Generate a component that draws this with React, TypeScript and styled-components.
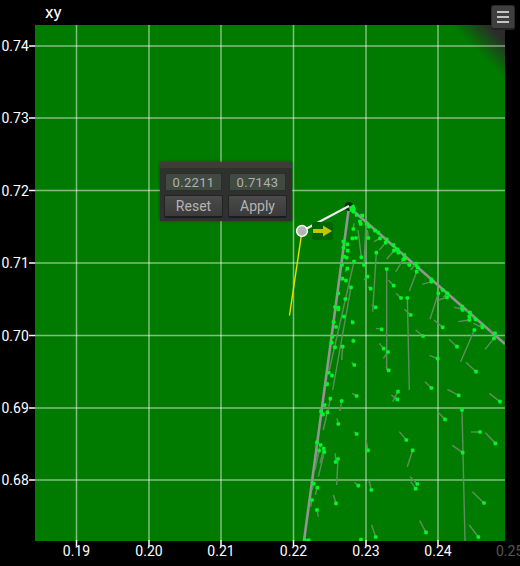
import styled, { createGlobalStyle } from 'styled-components'

const GlobalStyle = createGlobalStyle`
  html, body {
    margin: 0;
    background: #000;
    font-family: Roboto, 'Liberation Sans', sans-serif;
  }
`

type Arrow = [number, number, number, number]

// head x, head y, tail x, tail y: pixels of the upper half of the gamut
const upperArrows: Arrow[] = [
  [290, 177, 290, 480], [352, 264, 358, 540], [259, 128, 248, 305], [380, 185, 358, 243],
  [445, 250, 420, 328], [553, 360, 512, 455], [517, 297, 492, 292], [612, 385, 585, 418],
  [538, 330, 505, 335], [458, 352, 432, 330], [399, 378, 377, 360], [501, 410, 477, 388],
  [558, 485, 528, 457], [443, 446, 418, 436], [362, 315, 343, 298], [333, 264, 318, 250],
  [311, 227, 295, 210], [257, 292, 245, 285], [275, 358, 258, 355], [281, 416, 268, 400],
  [294, 426, 280, 445], [296, 481, 287, 470], [193, 465, 185, 457], [190, 393, 190, 385],
  [158, 410, 155, 450], [188, 337, 184, 330], [242, 236, 235, 230], [232, 200, 222, 210],
  [222, 165, 228, 40], [183, 232, 128, 540], [192, 155, 118, 480], [214, 142, 204, 60],
  [340, 148, 317, 186], [312, 122, 290, 147], [424, 215, 397, 223], [471, 262, 445, 270],
  [378, 161, 362, 180], [287, 98, 268, 120], [270, 85, 252, 95], [235, 84, 232, 60],
  [190, 57, 192, 40], [198, 84, 186, 85], [168, 212, 160, 205], [172, 176, 166, 185],
  [166, 267, 166, 275], [162, 320, 155, 318], [145, 293, 135, 285], [135, 412, 128, 408],
  [458, 240, 450, 236], [472, 250, 460, 262], [518, 300, 510, 290], [540, 308, 530, 300],
  [557, 328, 548, 322], [577, 352, 550, 340], [615, 370, 600, 362], [358, 165, 350, 160],
  [190, 5, 185, 3], [200, 15, 196, 10], [217, 17, 210, 12], [210, 35, 205, 30],
  [212, 42, 208, 38], [230, 40, 226, 35], [237, 50, 232, 45], [255, 62, 250, 58],
  [265, 68, 260, 64], [290, 88, 285, 84], [310, 105, 305, 100], [322, 118, 317, 113],
  [325, 128, 320, 123], [343, 135, 338, 130], [345, 145, 340, 140], [383, 172, 378, 168],
  [424, 208, 419, 204], [517, 290, 512, 286], [538, 320, 533, 316], [577, 345, 572, 341],
  [160, 95, 160, 90], [172, 103, 172, 98], [160, 113, 160, 108], [173, 122, 173, 117],
  [162, 140, 162, 135], [170, 143, 170, 138], [156, 165, 156, 160], [157, 206, 157, 201],
  [145, 250, 145, 245], [135, 291, 135, 286], [145, 298, 145, 293], [131, 336, 131, 331],
  [138, 351, 138, 346], [127, 380, 127, 375], [125, 398, 125, 393], [116, 488, 116, 483],
  [126, 497, 126, 492], [111, 522, 111, 517], [187, 85, 187, 80]
]

// same, for the lower half
const lowerArrows: Arrow[] = [
  [424, 24, 405, 5], [506, 46, 472, 28], [630, 65, 598, 40], [516, 90, 525, 483],
  [465, 118, 443, 95], [570, 156, 543, 156], [616, 190, 586, 158], [349, 180, 328, 155],
  [518, 218, 487, 196], [368, 211, 352, 260], [234, 211, 228, 180], [200, 162, 192, 155],
  [145, 132, 141, 115], [155, 63, 150, 93], [200, 48, 187, 40], [324, 35, 308, 65],
  [322, 58, 304, 45], [144, 237, 140, 315], [137, 246, 136, 220], [205, 317, 193, 307],
  [244, 330, 237, 300], [382, 312, 360, 290], [377, 326, 362, 305], [582, 369, 547, 335],
  [138, 370, 130, 345], [408, 457, 389, 422], [565, 471, 538, 435], [257, 471, 245, 435],
  [213, 479, 208, 483], [81, 390, 85, 410], [66, 360, 62, 380], [71, 311, 66, 330],
  [82, 323, 76, 345], [87, 212, 75, 270], [103, 216, 85, 290], [101, 206, 90, 250],
  [92, 195, 80, 240], [81, 187, 76, 200], [112, 97, 100, 150], [99, 103, 96, 110],
  [93, 94, 90, 100], [104, 75, 100, 85], [121, 56, 112, 100], [110, 13, 106, 20],
  [45, 481, 44, 483], [56, 481, 55, 483]
]

const xTicks = [
  { label: '0.19', x: 76.5 }, { label: '0.20', x: 149 }, { label: '0.21', x: 221 },
  { label: '0.22', x: 293.5 }, { label: '0.23', x: 366 }, { label: '0.24', x: 438 }
]
const yTicks = [
  { label: '0.74', y: 46 }, { label: '0.73', y: 118 }, { label: '0.72', y: 190.5 },
  { label: '0.71', y: 263 }, { label: '0.70', y: 335.5 }, { label: '0.69', y: 408 },
  { label: '0.68', y: 480 }
]

const upper = (x: number, y: number): [number, number] => [290 + x / 3, 210 + y / 3]
const lower = (x: number, y: number): [number, number] => [290 + x / 3, 380 + y / 3]

const ArrowSet = ({ arrows, map }: { arrows: Arrow[]; map: typeof upper }) => (
  <>
    {arrows.map(([hx, hy, tx, ty]) => {
      const [x1, y1] = map(hx, hy)
      const [x2, y2] = map(tx, ty)
      return <line key={`t${hx}-${hy}`} x1={x1} y1={y1} x2={x2} y2={y2} stroke="#5f8f5f" strokeWidth="1.4" />
    })}
    {arrows.map(([hx, hy]) => {
      const [cx, cy] = map(hx, hy)
      return <rect key={`h${hx}-${hy}`} x={cx - 1.8} y={cy - 1.8} width="3.6" height="3.6" rx="1" fill="#00f82a" />
    })}
  </>
)

const Chart = () => (
  <ChartSvg viewBox="0 0 520 566" width="520" height="566">
    <defs>
      <linearGradient id="outside" x1="505" y1="25" x2="478" y2="52" gradientUnits="userSpaceOnUse">
        <stop offset="0" stopColor="#2b2b2b" />
        <stop offset="0.3" stopColor="#2b2b2b" />
        <stop offset="1" stopColor="#2b2b2b" stopOpacity="0" />
      </linearGradient>
      <clipPath id="plot">
        <rect x="35" y="25" width="470" height="516" />
      </clipPath>
    </defs>

    <rect x="35" y="25" width="470" height="516" fill="#007b00" />
    <rect x="35" y="25" width="470" height="516" fill="url(#outside)" />

    <g stroke="#fff" strokeOpacity="0.5" strokeWidth="1.5">
      {xTicks.map((t) => <line key={t.label} x1={t.x} y1="25" x2={t.x} y2="541" />)}
      {yTicks.map((t) => <line key={t.label} x1="35" y1={t.y} x2="505" y2={t.y} />)}
    </g>
    <g stroke="#fff" strokeWidth="1.5">
      {xTicks.map((t) => <line key={t.label} x1={t.x} y1="540" x2={t.x} y2="546" />)}
      {yTicks.map((t) => <line key={t.label} x1="29" y1={t.y} x2="35" y2={t.y} />)}
    </g>

    <g clipPath="url(#plot)">
      <line x1="349" y1="207" x2="304" y2="541" stroke="#949494" strokeWidth="2.6" />
      <line x1="349" y1="207" x2="505" y2="344" stroke="#949494" strokeWidth="2.6" />
      <ArrowSet arrows={upperArrows} map={upper} />
      <ArrowSet arrows={lowerArrows} map={lower} />
    </g>

    <circle cx="349" cy="206.5" r="4.5" fill="#0a2a0a" />
    <path d="M349 207 L354 204 L356 210 L350 212 Z" fill="#00f82a" />
    <line x1="289.5" y1="315.5" x2="302" y2="231" stroke="#e6e000" strokeWidth="1.4" />
    <line x1="302" y1="231" x2="349" y2="206" stroke="#eee" strokeWidth="2" />
    <circle cx="302" cy="231" r="5.4" fill="#b4b4b4" stroke="#fff" strokeWidth="1.5" />
    <rect x="312" y="222" width="21" height="18" rx="3" fill="#006400" />
    <path d="M313 229 H323 V225.5 L332 231 L323 236.5 V233 H313 Z" fill="#c4c400" />

    <g fill="#fff" fontSize="14" fontFamily="Roboto, sans-serif">
      {xTicks.map((t) => <text key={t.label} x={t.x} y="556" textAnchor="middle">{t.label}</text>)}
      {yTicks.map((t) => <text key={t.label} x="1.5" y={t.y + 5}>{t.label}</text>)}
      <text x="496" y="556" fillOpacity="0.35">0.25</text>
    </g>
  </ChartSvg>
)

export default function App() {
  return (
    <Page>
      <GlobalStyle />
      <Header>
        <Title>xy</Title>
      </Header>
      <Chart />
      <MenuButton aria-label="Menu">
        <MenuBar />
        <MenuBar />
        <MenuBar />
      </MenuButton>
      <Panel>
        <PanelTitle />
        <PanelGrid>
          <ValueField>0.2211</ValueField>
          <ValueField>0.7143</ValueField>
          <PanelButton>Reset</PanelButton>
          <PanelButton>Apply</PanelButton>
        </PanelGrid>
      </Panel>
    </Page>
  )
}

const Page = styled.div`
  position: relative;
  width: 520px;
  height: 566px;
  overflow: hidden;
  background: #000;
`

const Header = styled.header`
  position: absolute;
  top: 0;
  left: 0;
  right: 0;
  height: 25px;
  display: flex;
  align-items: center;
  padding-left: 45px;
  z-index: 1;
`

const Title = styled.h1`
  margin: 0;
  font-size: 17px;
  font-weight: 400;
  line-height: 25px;
  color: #fff;
`

const ChartSvg = styled.svg`
  display: block;
`

const MenuButton = styled.button`
  position: absolute;
  top: 5px;
  left: 491px;
  width: 24px;
  height: 25px;
  padding: 0;
  display: flex;
  flex-direction: column;
  align-items: center;
  justify-content: center;
  gap: 3px;
  background: #3f3f3f;
  border: 1px solid #2a2a2a;
  border-bottom: 2px solid #222;
  border-radius: 3px;
`

const MenuBar = styled.span`
  width: 12px;
  height: 2px;
  background: #c4c4c4;
`

const Panel = styled.div`
  position: absolute;
  top: 162px;
  left: 160px;
  width: 132px;
  height: 59px;
  background: #2f312f;
  box-shadow: 0 0 3px rgba(0, 0, 0, 0.4);
`

const PanelTitle = styled.div`
  height: 6px;
  background: #3c3c3c;
`

const PanelGrid = styled.div`
  display: grid;
  grid-template-columns: 59px 59px;
  grid-template-rows: 18px 23px;
  column-gap: 5px;
  row-gap: 4px;
  padding: 5px 0 0 4px;
`

const ValueField = styled.div`
  display: flex;
  align-items: center;
  justify-content: center;
  margin: 0 1px;
  background: #404a40;
  border: 1px solid #2a2f2a;
  border-radius: 2px;
  color: #b0b0b0;
  font-size: 13px;
  letter-spacing: 0.3px;
`

const PanelButton = styled.button`
  padding: 0;
  background: linear-gradient(#4b4b4b, #3a3a3a);
  border: 1px solid #222;
  border-bottom: 2px solid #1c1c1c;
  border-radius: 2px;
  color: #b4b4b4;
  font-family: inherit;
  font-size: 14px;
`
